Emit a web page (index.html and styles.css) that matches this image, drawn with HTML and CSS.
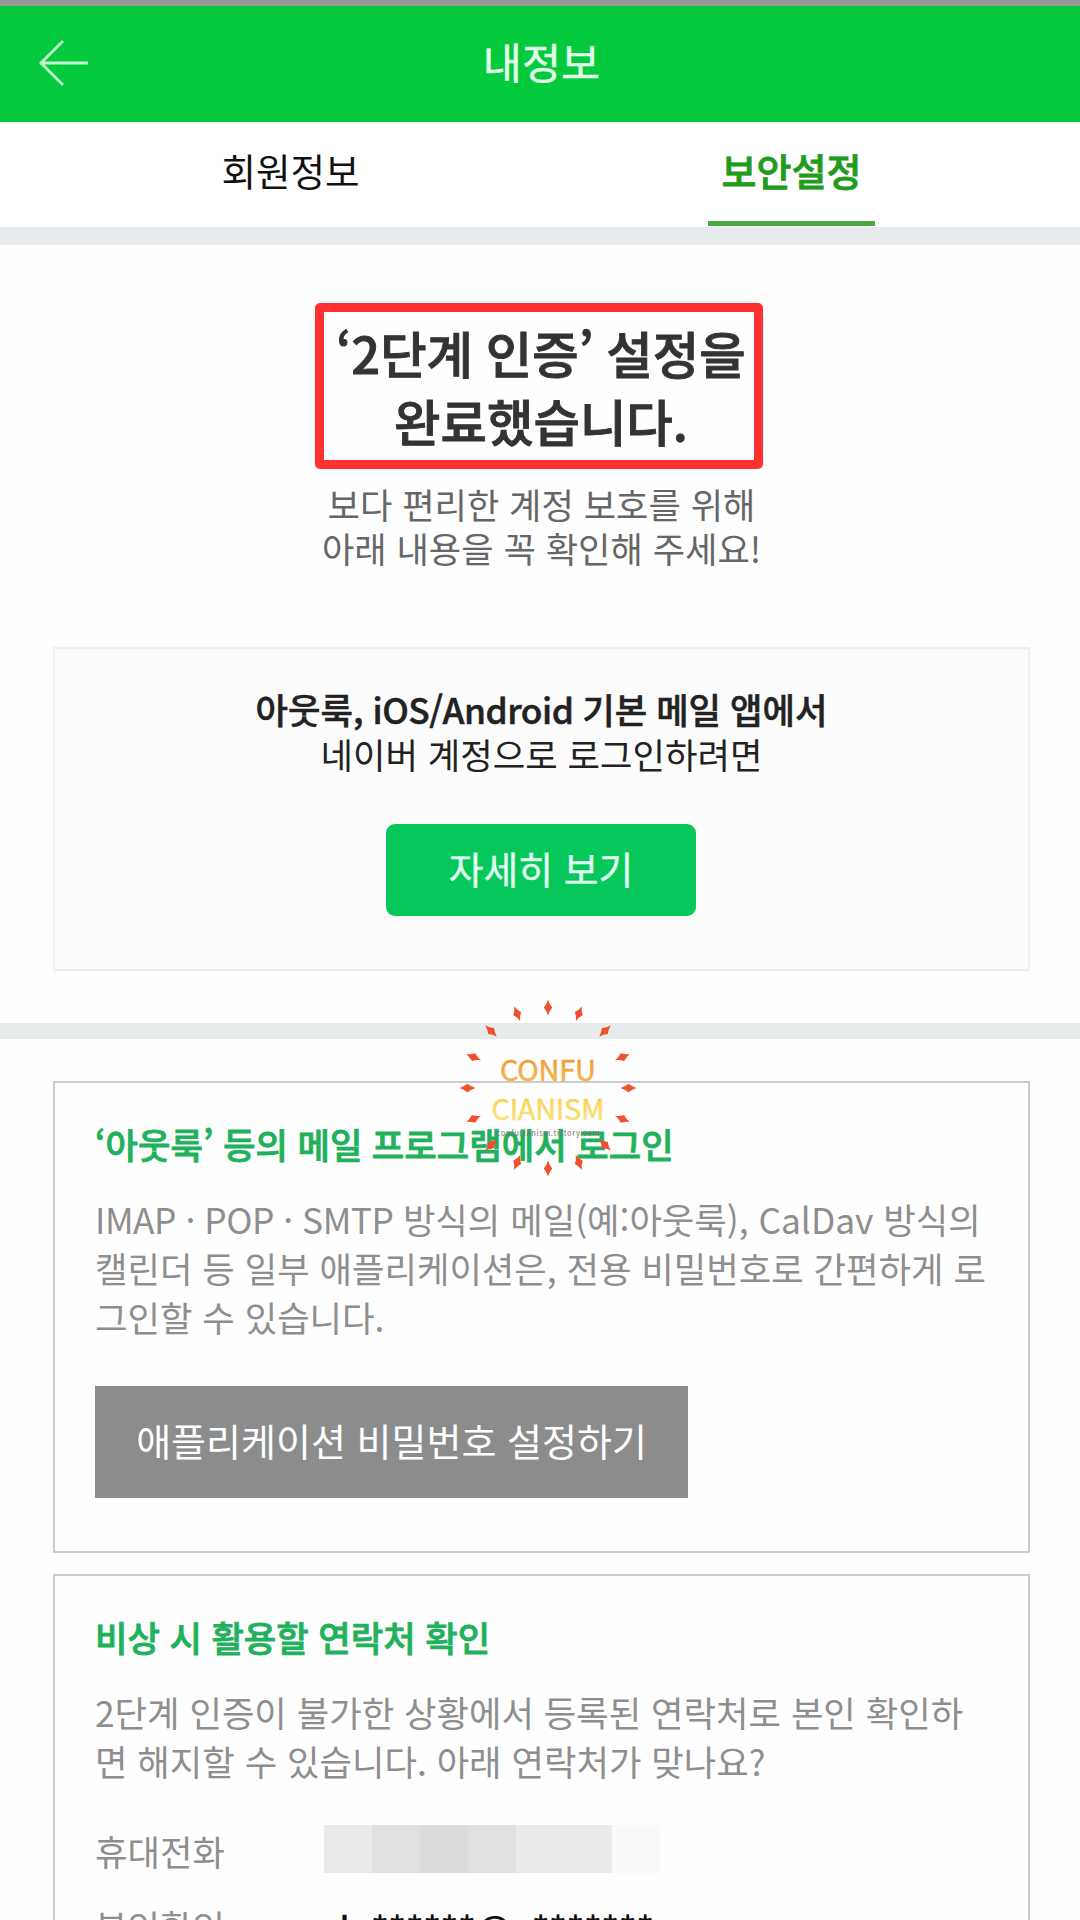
FILE: index.html
```html
<!DOCTYPE html>
<html lang="ko">
<head>
<meta charset="utf-8">
<title>내정보</title>
<link rel="stylesheet" href="styles.css">
</head>
<body>
<div class="screen">
  <header class="topbar">
    <svg class="back" width="52" height="48" viewBox="0 0 52 48" fill="none" stroke="#c4f7cf" stroke-width="2.8"><path d="M26 2 4 24 26 46M3 24H51"/></svg>
    <h1 class="topbar-title">내정보</h1>
  </header>
  <nav class="tabs">
    <a class="tab"><span class="tab-label">회원정보</span></a>
    <a class="tab active"><span class="tab-label">보안설정</span></a>
  </nav>
  <section class="done">
    <h2 class="done-title">‘2단계 인증’ 설정을<br>완료했습니다.</h2>
    <p class="done-text">보다 편리한 계정 보호를 위해<br>아래 내용을 꼭 확인해 주세요!</p>
    <div class="mail-card">
      <p class="mail-text"><strong>아웃룩, <span class="platforms">iOS/Android</span> 기본 메일 앱에서</strong><br>네이버 계정으로 로그인하려면</p>
      <a class="more">자세히 보기</a>
    </div>
  </section>
  <main class="boxes">
    <section class="box box-app">
      <h3 class="box-title">‘아웃룩’ 등의 메일 프로그램에서 로그인</h3>
      <p class="box-text"><span class="protocols">IMAP · POP · SMTP </span>방식의 메일(예:아웃룩), CalDav 방식의<br>캘린더 등 일부 애플리케이션은, 전용 비밀번호로 간편하게 로<br>그인할 수 있습니다.</p>
      <a class="app-button">애플리케이션 비밀번호 설정하기</a>
    </section>
    <section class="box box-contact">
      <h3 class="box-title">비상 시 활용할 연락처 확인</h3>
      <p class="box-text">2단계 인증이 불가한 상황에서 등록된 연락처로 본인 확인하<br>면 해지할 수 있습니다. 아래 연락처가 맞나요?</p>
      <dl class="contacts">
        <dt>휴대전화</dt>
        <dd class="mosaic"><i class="m1"></i><i class="m2"></i><i class="m3"></i><i class="m2"></i><i class="m1"></i><i class="m1"></i><i class="m4"></i></dd>
        <dt>본인확인</dt>
        <dd class="mail">du******@n*******</dd>
      </dl>
    </section>
  </main>
  <svg class="stamp" width="200" height="200" viewBox="-100 -100 200 200">
    <defs>
      <path id="spark" d="M0-88.5Q1.2-84 4.2-80.5Q1.2-77 0-72.5Q-1.2-77-4.2-80.5Q-1.2-84 0-88.5Z"/>
      <linearGradient id="sun" gradientUnits="userSpaceOnUse" x1="0" y1="-30" x2="0" y2="34">
        <stop offset="0" stop-color="#f09a38"/><stop offset=".5" stop-color="#f9bd4e"/><stop offset=".7" stop-color="#fcd458"/><stop offset="1" stop-color="#f7e47e"/>
      </linearGradient>
    </defs>
    <g fill="#f0502f">
      <use href="#spark"/><use href="#spark" transform="rotate(22.5)"/><use href="#spark" transform="rotate(45)"/><use href="#spark" transform="rotate(67.5)"/>
      <use href="#spark" transform="rotate(90)"/><use href="#spark" transform="rotate(112.5)"/><use href="#spark" transform="rotate(135)"/><use href="#spark" transform="rotate(157.5)"/>
      <use href="#spark" transform="rotate(180)"/><use href="#spark" transform="rotate(202.5)"/><use href="#spark" transform="rotate(225)"/><use href="#spark" transform="rotate(247.5)"/>
      <use href="#spark" transform="rotate(270)"/><use href="#spark" transform="rotate(292.5)"/><use href="#spark" transform="rotate(315)"/><use href="#spark" transform="rotate(337.5)"/>
    </g>
    <g text-anchor="middle">
      <text class="stamp-name" x="0" y="-7.5" textLength="96">CONFU</text>
      <text class="stamp-name" x="0" y="31.5" textLength="113">CIANISM</text>
      <text class="stamp-url" x="0" y="48" textLength="103">confucianism.tistory.com</text>
    </g>
  </svg>
</div>
</body>
</html>
```
FILE: styles.css
```css
* { box-sizing: border-box; }
body { margin: 0; background: #fff; font-family: "Noto Sans CJK KR", sans-serif; }
h1, h2, h3, p, dl, dd { margin: 0; }

.screen { position: relative; width: 1080px; height: 1920px; overflow: hidden; background: #fefefe; }

.topbar { height: 122px; border-top: 6px solid #999; background: #03c93d; display: grid; grid-template-columns: 120px 1fr 120px; align-items: center; }
.back { margin-left: 37px; margin-top: -3px; }
.topbar-title { color: #e2ffe9; font-size: 42.5px; font-weight: 400; -webkit-text-stroke: .5px; line-height: 60px; text-align: center; margin-top: -6px; padding-left: 3px; }

.tabs { height: 123px; border-bottom: 18px solid #e7ebed; background: #fff; display: flex; padding: 0 38px 0 40px; }
.tab { flex: 1; display: flex; justify-content: center; font-size: 37.5px; color: #111; }
.tab-label { width: 167px; height: 104px; line-height: 96px; text-align: center; white-space: nowrap; }
.tab.active .tab-label { font-size: 38px; font-weight: 500; -webkit-text-stroke: .8px; color: #219b1b; border-bottom: 5px solid #4aaa46; }

.done { height: 794px; padding: 58px 50px 0 53px; border-bottom: 16px solid #e8ebec; display: flex; flex-direction: column; align-items: center; }
.done-title { width: 448px; height: 166px; margin-right: 5px; border: 9px solid #ff3131; border-radius: 5px; color: #333; font-size: 50.5px; font-weight: 500; -webkit-text-stroke: .9px; word-spacing: -1.5px; line-height: 68px; text-align: center; padding: 6px 0 0 4px; white-space: nowrap; }
.done-text { margin-top: 13px; color: #666; font-size: 35.2px; line-height: 44px; text-align: center; }
.mail-card { width: 977px; height: 324px; margin-top: 77px; border: 2px solid #efefef; background: #fcfcfc; padding-top: 37px; display: flex; flex-direction: column; align-items: center; }
.mail-text { color: #222; font-size: 35.3px; line-height: 45px; text-align: center; }
.mail-text strong { font-weight: 500; -webkit-text-stroke: .5px; word-spacing: -1px; }
.platforms { letter-spacing: -0.5px; }
.more { width: 310px; height: 92px; margin: 48px 1px 0 0; border-radius: 9px; background: #05c75a; color: #e0fff0; font-size: 37.8px; font-weight: 400; -webkit-text-stroke: .4px; line-height: 88px; text-align: center; }

.boxes { padding: 42px 50px 0 53px; display: flex; flex-direction: column; gap: 21px; }
.box { border: 2px solid #cbcbcb; padding: 36px 0 0 40px; white-space: nowrap; }
.box-app { height: 472px; }
.box-contact { height: 420px; }
.box-title { color: #1fb15c; font-size: 35.3px; font-weight: 500; -webkit-text-stroke: .8px; word-spacing: -.4px; line-height: 49px; }
.box-text { margin-top: 26px; color: #8e8e8e; font-size: 35.3px; line-height: 49px; }
.protocols { letter-spacing: -0.45px; }
.app-button { display: block; width: 593px; height: 112px; margin-top: 45px; background: #8c8c8c; color: #fff; font-size: 38px; line-height: 108px; text-align: center; }

.contacts { margin-top: 40px; display: grid; grid-template-columns: 229px 1fr; grid-template-rows: 48px 48px; row-gap: 27px; font-size: 35.3px; line-height: 51px; color: #8e8e8e; }
.mosaic { display: flex; }
.mosaic i { width: 48px; height: 48px; }
.m1 { background: #eaeaea; }
.m2 { background: #e1e1e1; }
.m3 { background: #dcdcdc; }
.m4 { background: #f9f9f9; }
.mail { padding-left: 3px; color: #111; font-size: 36px; font-weight: 500; line-height: 54px; }

.stamp { position: absolute; left: 448px; top: 988px; }
.stamp-name { font-size: 29px; fill: url(#sun); stroke: url(#sun); stroke-width: .5; }
.stamp-url { font-size: 7.5px; fill: #777; }
```
